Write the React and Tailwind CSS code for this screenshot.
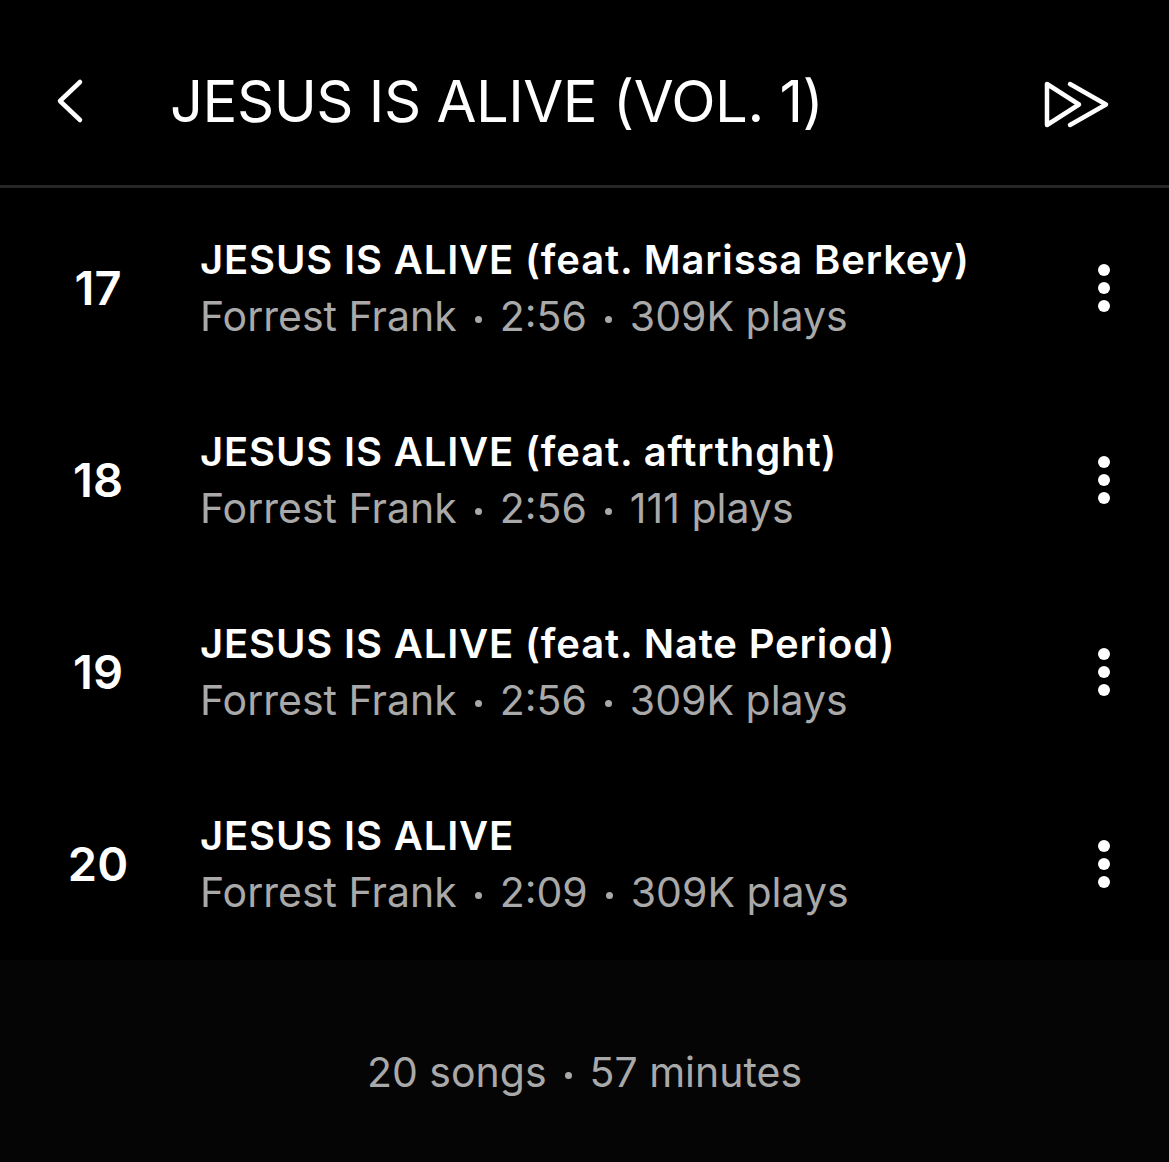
import React from "react";

const tracks = [
  { n: 17, title: "JESUS IS ALIVE (feat. Marissa Berkey)", sub: ["Forrest Frank", "2:56", "309K plays"] },
  { n: 18, title: "JESUS IS ALIVE (feat. aftrthght)", sub: ["Forrest Frank", "2:56", "111 plays"] },
  { n: 19, title: "JESUS IS ALIVE (feat. Nate Period)", sub: ["Forrest Frank", "2:56", "309K plays"] },
  { n: 20, title: "JESUS IS ALIVE", sub: ["Forrest Frank", "2:09", "309K plays"] },
];

function Kebab() {
  return (
    <svg width="24" height="54" viewBox="0 0 24 54" className="block">
      <circle cx="12" cy="9" r="6" fill="#ffffff" />
      <circle cx="12" cy="27" r="6" fill="#ffffff" />
      <circle cx="12" cy="45" r="6" fill="#ffffff" />
    </svg>
  );
}

function Dot() {
  return <span className="inline-block w-[7px] h-[7px] rounded-full bg-[#a9a9a9] align-middle mx-[18px]" />;
}

export default function App() {
  return (
    <div
      className="w-[1169px] h-[1162px] bg-black text-white flex flex-col overflow-hidden"
      style={{ fontFamily: "Inter, 'Noto Sans', sans-serif" }}
    >
      {/* Header */}
      <div className="h-[185px] flex items-start shrink-0">
        <div className="pt-[78px] pl-[52px] w-[170px] shrink-0">
          <svg width="40" height="46" viewBox="0 0 40 46" className="block">
            <path d="M28 4 L8 23 L28 42" fill="none" stroke="#ffffff" strokeWidth="4.5" strokeLinecap="round" strokeLinejoin="round" />
          </svg>
        </div>
        <div className="pt-[66px] flex-1 text-[58px] leading-[70px] font-normal tracking-[-0.5px] whitespace-nowrap">
          JESUS IS ALIVE (VOL. 1)
        </div>
        <div className="pt-[78px] pr-[57px] shrink-0">
          <svg width="72" height="54" viewBox="0 0 72 54" className="block">
            <path d="M7 6 L7 47 L39 26.5 Z" fill="none" stroke="#ffffff" strokeWidth="4.5" strokeLinecap="round" strokeLinejoin="round" />
            <path d="M30 6 L66 26.5 L30 47" fill="none" stroke="#ffffff" strokeWidth="4.5" strokeLinecap="round" strokeLinejoin="round" />
          </svg>
        </div>
      </div>
      <div className="h-[3px] bg-[#262626] shrink-0" />

      {/* List */}
      <div className="pt-[4px] flex flex-col shrink-0">
        {tracks.map((t) => (
          <div key={t.n} className="h-[192px] flex items-center">
            <div className="ml-[50px] w-[96px] text-center text-[47px] leading-[56px] font-semibold shrink-0">
              {t.n}
            </div>
            <div className="ml-[54px] flex-1 min-w-0">
              <div className="text-[40px] leading-[56px] font-semibold whitespace-nowrap tracking-[0.85px]">
                {t.title}
              </div>
              <div className="text-[41px] leading-[56px] font-normal text-[#a9a9a9] whitespace-nowrap">
                {t.sub[0]}
                <Dot />
                {t.sub[1]}
                <Dot />
                {t.sub[2]}
              </div>
            </div>
            <div className="w-[24px] mr-[53px] shrink-0">
              <Kebab />
            </div>
          </div>
        ))}
      </div>

      {/* Footer */}
      <div className="flex-1 bg-[#050505] flex justify-center pt-[86px]">
        <div className="text-[41px] leading-[52px] text-[#a9a9a9] whitespace-nowrap">
          20 songs
          <Dot />
          57 minutes
        </div>
      </div>
    </div>
  );
}
